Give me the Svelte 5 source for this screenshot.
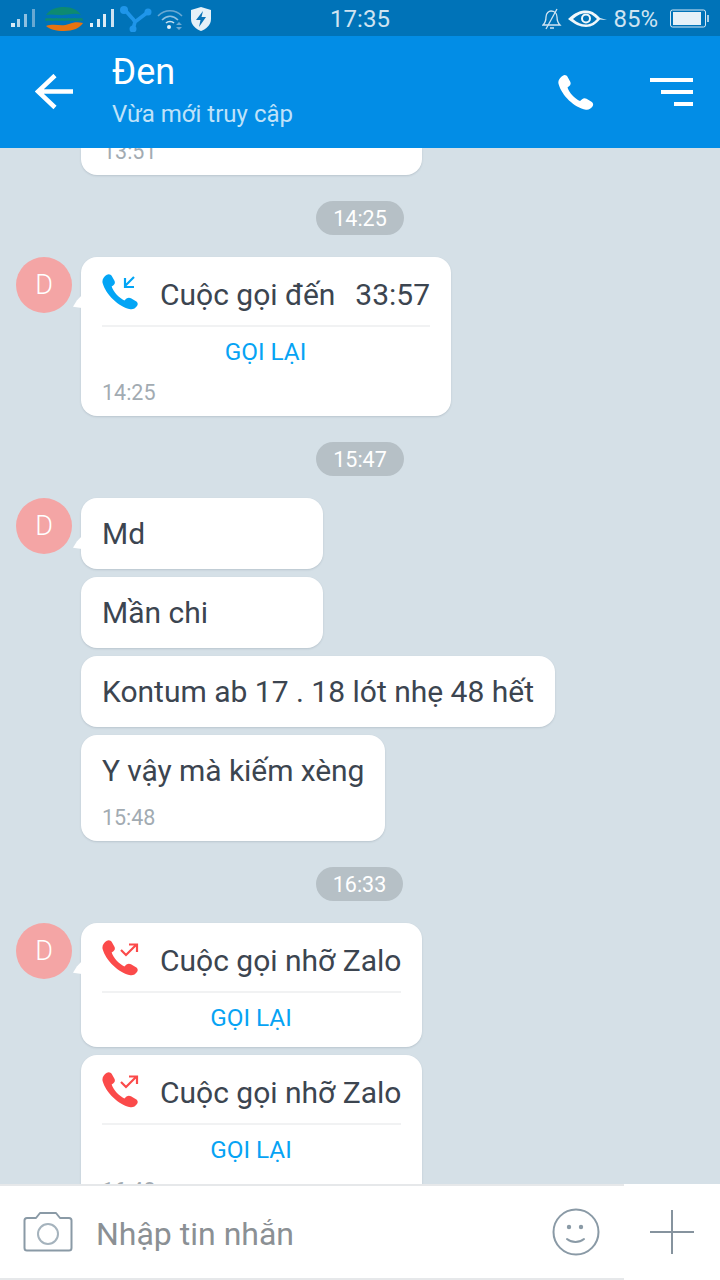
<script>
  const phone =
    "M4.2 1.2 C5.6 .4 7 .9 7.7 2.2 L9.6 5.6 C10.2 6.8 9.9 7.9 8.9 8.7 L7.6 9.7 C8.9 13.6 12.6 17.6 16.7 19.6 L18.2 18.3 C19.2 17.5 20.3 17.4 21.4 18 L25 20.1 C26.3 20.9 26.6 22.4 25.7 23.6 C24.6 25.2 22.9 26.2 21 25.9 C12.5 24.4 3.4 15.4 1.2 7.4 C.5 4.9 1.9 2.6 4.2 1.2 Z";
</script>

{#snippet avatar()}
  <div class="avatar">D</div>
  <div class="tail"></div>
{/snippet}

{#snippet callHead(kind, label, duration)}
  <div class="call-head">
    <svg class="call-icon" viewBox="0 0 38 42" width="38" height="42">
      {#if kind === "in"}
        <path d={phone} transform="translate(-1 3) scale(1.4)" fill="#03a5f5" />
        <path d="M32 7 L23 16 M23 8 V17 H32" fill="none" stroke="#03a5f5" stroke-width="2.2" />
      {:else}
        <path d={phone} transform="translate(-1 3) scale(1.4)" fill="#fb4a4a" />
        <path d="M19 14 L24 19 L34 9 M27 8.500 H35 V16" fill="none" stroke="#fb4a4a" stroke-width="2.2" />
      {/if}
    </svg>
    <span class="call-label">{label}</span>
    {#if duration}<span class="call-duration">{duration}</span>{/if}
  </div>
  <div class="rule"></div>
  <div class="redial">GỌI LẠI</div>
{/snippet}

<div class="screen">
  <div class="statusbar">
    <div class="status-left">
      <svg width="25" height="20" viewBox="0 0 25 20" class="signal">
        <rect x="0" y="14" width="4" height="4" fill="#d8eaf5" />
        <rect x="6" y="10" width="3" height="8" fill="#b4d6eb" />
        <rect x="13" y="5" width="3" height="13" fill="#8fc0e0" />
        <rect x="21" y="0" width="3" height="18" fill="#68a8d2" />
      </svg>
      <svg width="42" height="26" viewBox="0 0 42 26" class="carrier">
        <path d="M3 9 C7 3 14 1 21 1 C29 1 35 4 38 9 C30 6 24 10 16 9 C11 8.500 7 8 3 9 Z" fill="#0d8a72" />
        <path d="M2 12 H40 V15 H2 Z" fill="#0d8a72" stroke="#0073b8" stroke-width=".600" stroke-dasharray="5 1" />
        <path d="M3 20 C12 17 18 21 26 18 C31 16 35 16 40 17 C37 22 30 25 21 25 C13 25 6 23 3 20 Z" fill="#e8730f" />
      </svg>
      <svg width="25" height="20" viewBox="0 0 25 20" class="signal second">
        <rect x="0" y="14" width="3" height="4" fill="#e6f1f8" />
        <rect x="7" y="10" width="3" height="8" fill="#dcebf5" />
        <rect x="13" y="5" width="3" height="13" fill="#dcebf5" />
        <rect x="21" y="0" width="3" height="18" fill="#cfe3f1" />
      </svg>
      <svg width="32" height="26" viewBox="0 0 32 26" class="branch">
        <path d="M4 3 C7 6 9 9 13 13 L15 16 L28 6 M15 16 L13 23" fill="none" stroke="#1f96ea" stroke-width="3.600" />
        <circle cx="4" cy="4" r="4" fill="#1f96ea" />
        <circle cx="28" cy="6" r="3.500" fill="#1f96ea" />
        <circle cx="13" cy="23" r="3.500" fill="#1f96ea" />
      </svg>
      <svg width="26" height="22" viewBox="0 0 26 22" class="wifi">
        <path d="M1 8 C8 1 18 1 25 8" fill="none" stroke="#6aa9d3" stroke-width="1.600" />
        <path d="M5 12 C10 7 16 7 21 12" fill="none" stroke="#8fc0e0" stroke-width="1.600" />
        <path d="M9 15 C11 13 15 13 17 15" fill="none" stroke="#c6e0f0" stroke-width="1.600" />
        <circle cx="12" cy="19" r="2" fill="#e6f1f8" />
        <path d="M19 17 h6 l-3 -3 Z M19 19 h6 l-3 3 Z" fill="#6aa9d3" />
      </svg>
      <svg width="22" height="26" viewBox="0 0 22 26" class="shield">
        <path d="M11 1 L21 4 V13 C21 19 16 23 11 25 C6 23 1 19 1 13 V4 Z" fill="#e6f1f8" />
        <path d="M13 5 L6 14 H10.500 L9 21 L16 11 H11.500 Z" fill="#0a73b7" />
      </svg>
    </div>
    <div class="clock">17:35</div>
    <div class="status-right">
      <svg width="20" height="22" viewBox="0 0 20 22" class="bell">
        <path d="M1 17 C3 15 4 13 4 9 C4 5 7 3 9 3 C12 3 15 5 15 9 C15 13 16 15 18 17 Z M8 20 H12" fill="none" stroke="#d0e4f2" stroke-width="1.300" />
        <path d="M4 21 L15 1" stroke="#d0e4f2" stroke-width="1.300" />
      </svg>
      <svg width="40" height="20" viewBox="0 0 40 20" class="eye">
        <path d="M1 10 C8 3 14 1.500 19 1.500 C26 1.500 30 6 33 9 L40 11 L33 10.500 C29 15 25 18 19 18 C13 18 7 15 1 10 Z M6 10 C10 14 15 15.500 19 15.500 C24 15.500 27 13 30 10 C26 6 23 4 19 4 C15 4 10 6 6 10 Z" fill="#f0f7fb" fill-rule="evenodd" />
        <circle cx="19" cy="9.500" r="4" fill="none" stroke="#f0f7fb" stroke-width="2" />
      </svg>
      <span class="percent">85%</span>
      <svg width="40" height="20" viewBox="0 0 40 20" class="battery">
        <rect x=".5" y="1" width="35" height="17" rx="2" fill="none" stroke="#d6e8f4" />
        <rect x="3" y="3" width="28" height="13" fill="#e6f1f8" />
        <rect x="37" y="6" width="2" height="7" fill="#a8cfe8" />
      </svg>
    </div>
  </div>

  <header class="topbar">
    <svg class="back" width="40" height="36" viewBox="0 0 40 36">
      <path d="M20 1.500 L3 17.500 L20 33.500 M3 17.500 H38" fill="none" stroke="#fff" stroke-width="4.500" />
    </svg>
    <div class="title">
      <div class="name">Đen</div>
      <div class="seen">Vừa mới truy cập</div>
    </div>
    <svg class="call-btn" viewBox="0 0 38 38" width="38" height="38">
      <path d={phone} transform="translate(0 1) scale(1.38)" fill="#fff" />
    </svg>
    <div class="menu">
      <span class="l1"></span>
      <span class="l2"></span>
      <span class="l3"></span>
    </div>
  </header>

  <main class="chat">
    <div class="bubble clipped"><div class="time">13:51</div></div>

    <div class="pill">14:25</div>
    <div class="row">
      {@render avatar()}
      <div class="bubble call w370">
        {@render callHead("in", "Cuộc gọi đến", "33:57")}
        <div class="time after">14:25</div>
      </div>
    </div>

    <div class="pill">15:47</div>
    <div class="row">
      {@render avatar()}
      <div class="bubble text w242">Md</div>
    </div>
    <div class="bubble text w242 indent">Mần chi</div>
    <div class="bubble text indent fit">Kontum ab 17 . 18 lót nhẹ 48 hết</div>
    <div class="bubble text indent fit tight">
      Y vậy mà kiếm xèng
      <div class="time">15:48</div>
    </div>

    <div class="pill narrow">16:33</div>
    <div class="row">
      {@render avatar()}
      <div class="bubble call w341">
        {@render callHead("out", "Cuộc gọi nhỡ Zalo")}
      </div>
    </div>
    <div class="bubble call w341 indent">
      {@render callHead("out", "Cuộc gọi nhỡ Zalo")}
      <div class="time after">16:48</div>
    </div>
  </main>

  <footer class="composer">
    <div class="input-row">
      <svg class="camera" width="50" height="42" viewBox="0 0 50 42">
        <path d="M4 7 H13 L17 2 H33 L37 7 H46 C47.500 7 48.500 8 48.500 9.500 V37 C48.500 38.500 47.500 39.500 46 39.500 H4 C2.500 39.500 1.500 38.500 1.500 37 V9.500 C1.500 8 2.500 7 4 7 Z" fill="none" stroke="#8a9aa6" stroke-width="2" stroke-linejoin="round" />
        <circle cx="25" cy="23" r="10" fill="none" stroke="#a5b3bd" stroke-width="2" />
      </svg>
      <span class="placeholder">Nhập tin nhắn</span>
      <svg class="smile" width="48" height="48" viewBox="0 0 48 48">
        <circle cx="24" cy="24" r="22.500" fill="none" stroke="#8a9aa6" stroke-width="2" />
        <circle cx="17" cy="19" r="2.200" fill="#8a9aa6" />
        <circle cx="29" cy="19" r="2.200" fill="#8a9aa6" />
        <path d="M15 31 C20 35 27 35 32 31" fill="none" stroke="#8a9aa6" stroke-width="2" stroke-linecap="round" />
      </svg>
    </div>
    <div class="plus-cell">
      <svg width="44" height="44" viewBox="0 0 44 44">
        <path d="M22 0 V44 M0 22 H44" stroke="#86939e" stroke-width="2" />
      </svg>
    </div>
  </footer>
</div>

<style>
  :global(body) {
    margin: 0;
  }

  .screen {
    width: 720px;
    height: 1280px;
    display: flex;
    flex-direction: column;
    overflow: hidden;
    background: #d5e0e7;
    font-family: Roboto, "Liberation Sans", sans-serif;
  }

  .statusbar {
    height: 36px;
    flex: none;
    display: grid;
    grid-template-columns: 1fr auto 1fr;
    align-items: center;
    background: #0073b8;
    color: #cfe3f1;
  }

  .status-left {
    display: flex;
    align-items: center;
    padding-left: 11px;
  }

  .carrier {
    margin-left: 7px;
  }

  .signal.second {
    margin-left: 5px;
  }

  .branch {
    margin-left: 5px;
  }

  .wifi {
    margin-left: 5px;
  }

  .shield {
    margin-left: 7px;
  }

  .clock {
    font-size: 24px;
    line-height: 38px;
  }

  .status-right {
    display: flex;
    align-items: center;
    justify-content: flex-end;
    padding-right: 10px;
  }

  .eye {
    margin-left: 5px;
  }

  .percent {
    margin-left: 6px;
    font-size: 24px;
  }

  .battery {
    margin-left: 12px;
  }

  .topbar {
    height: 112px;
    flex: none;
    display: flex;
    align-items: center;
    background: #028de6;
    color: #fff;
  }

  .back {
    margin: 0 0 0 35px;
    flex: none;
  }

  .title {
    margin-left: 37px;
    padding-bottom: 3px;
    flex: 1;
  }

  .name {
    font-size: 36px;
    line-height: 40px;
  }

  .seen {
    margin-top: 7px;
    font-size: 24px;
    line-height: 30px;
    color: #bfe2f9;
  }

  .call-btn {
    margin-right: 55px;
  }

  .menu {
    display: flex;
    flex-direction: column;
    align-items: flex-end;
    gap: 8px;
    margin-right: 27px;
  }

  .menu span {
    height: 4px;
    background: #fff;
  }

  .l1 {
    width: 43px;
  }

  .l2 {
    width: 32px;
  }

  .l3 {
    width: 19px;
  }

  .chat {
    flex: 1;
    min-height: 0;
    overflow: hidden;
    display: flex;
    flex-direction: column;
    align-items: flex-start;
    color: #3c4550;
  }

  .row {
    display: flex;
    align-items: flex-start;
    position: relative;
    padding-left: 16px;
  }

  .avatar {
    width: 56px;
    height: 56px;
    margin-right: 9px;
    flex: none;
    border-radius: 50%;
    background: #f4a5a5;
    color: #fff;
    font-size: 27px;
    font-weight: 300;
    line-height: 56px;
    text-align: center;
  }

  .tail {
    position: absolute;
    left: 73px;
    top: 38px;
    width: 9px;
    height: 13px;
    background: #fff;
    clip-path: polygon(100% 0, 100% 100%, 0 90%, 45% 40%);
  }

  .bubble {
    box-sizing: border-box;
    flex: none;
    background: #fff;
    border-radius: 16px;
    box-shadow: 0 1px 2px rgba(60, 80, 95, 0.18);
  }

  .clipped {
    width: 341px;
    height: 27px;
    margin-left: 81px;
    padding: 0 22px;
    border-radius: 0 0 16px 16px;
    display: flex;
    align-items: flex-end;
    overflow: hidden;
  }

  .clipped .time {
    margin: 0 0 11px;
    line-height: 24px;
  }

  .pill {
    align-self: center;
    box-sizing: border-box;
    width: 88px;
    height: 34px;
    margin: 26px 0 22px;
    border-radius: 17px;
    background: #b6c0c6;
    color: #fff;
    font-size: 21.500px;
    line-height: 36px;
    text-align: center;
  }

  .pill.narrow {
    width: 87px;
    margin-right: 1px;
  }

  .indent {
    margin-left: 81px;
    margin-top: 8px;
  }

  .w242 {
    width: 242px;
  }

  .w370 {
    width: 370px;
  }

  .w341 {
    width: 341px;
  }

  .text {
    padding: 18px 21px 17px;
    font-size: 30px;
    line-height: 36px;
  }

  .fit {
    width: fit-content;
  }

  .tight {
    letter-spacing: -0.07px;
  }

  .time {
    margin-top: 14px;
    margin-bottom: -9px;
    color: #a2abb2;
    font-size: 21.500px;
    line-height: 30px;
  }

  .call {
    padding: 0 21px;
    overflow: hidden;
  }

  .call-head {
    height: 68px;
    display: flex;
    align-items: center;
    font-size: 30px;
    white-space: nowrap;
  }

  .call-label,
  .call-duration {
    padding-top: 7px;
  }

  .call-icon {
    flex: none;
    margin-right: 20px;
  }

  .call-duration {
    margin-left: auto;
  }

  .rule {
    height: 2px;
    background: #f1f2f3;
  }

  .redial {
    height: 54px;
    padding-right: 1px;
    color: #06a3f4;
    font-size: 24.300px;
    line-height: 49px;
    text-align: center;
  }

  .after {
    margin-top: -3px;
    margin-bottom: 8px;
  }

  .composer {
    height: 96px;
    flex: none;
    display: flex;
    background: #fff;
  }

  .input-row {
    box-sizing: border-box;
    width: 624px;
    display: flex;
    align-items: center;
    padding-left: 23px;
    border-top: 2px solid #e6e8ea;
    border-bottom: 2px solid #e6e8ea;
  }

  .placeholder {
    flex: 1;
    margin-left: 23px;
    padding-top: 3px;
    color: #8b9094;
    font-size: 32px;
  }

  .smile {
    margin-right: 24px;
  }

  .plus-cell {
    flex: 1;
    display: flex;
    align-items: center;
    justify-content: center;
  }
</style>
